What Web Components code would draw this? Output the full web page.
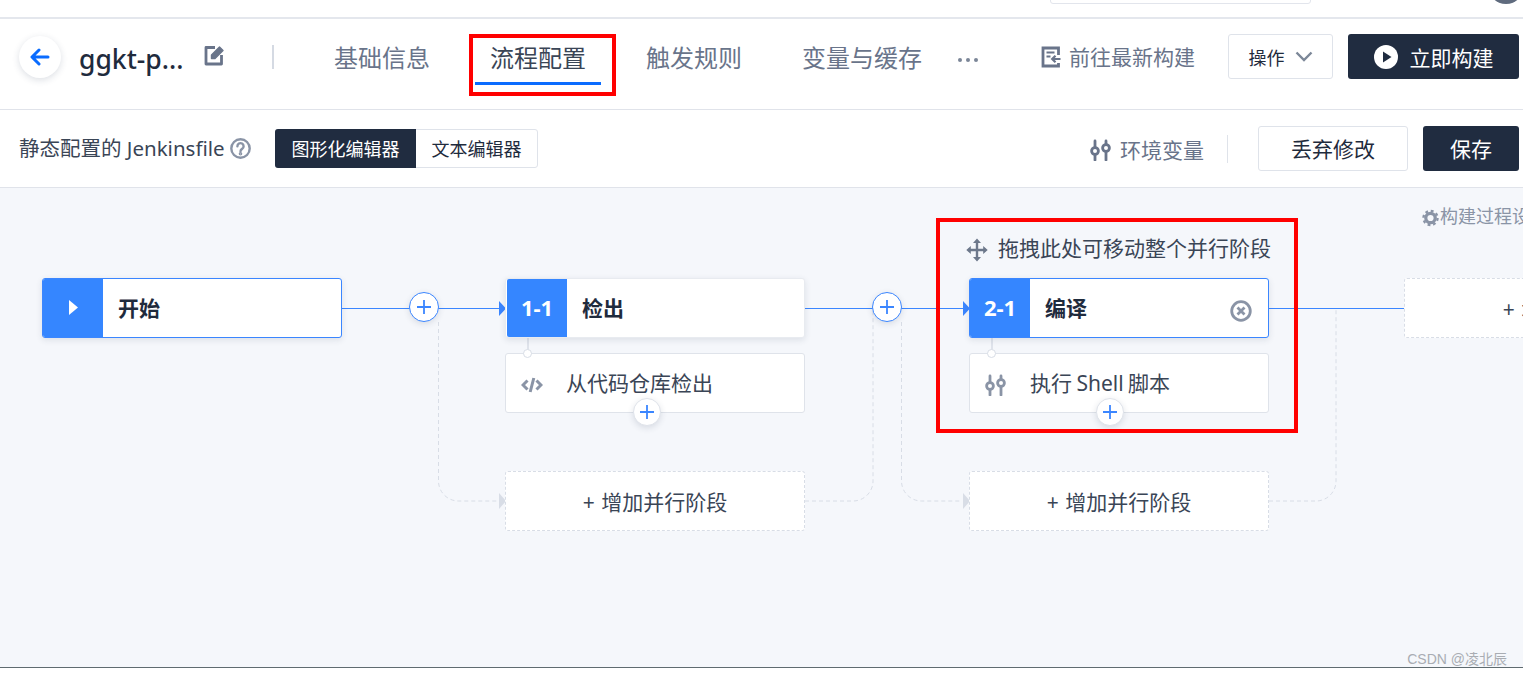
<!DOCTYPE html>
<html lang="zh">
<head>
<meta charset="utf-8">
<title>流程配置</title>
<style>
  html, body { margin: 0; height: 100%; overflow: hidden; background: #fff; }
  body { font-family: "Noto Sans", "Noto Sans CJK SC", sans-serif; color: #1f2b3d; }
</style>
</head>
<body>

<pipeline-page>
  <top-strip></top-strip>
  <pipeline-header>
    <nav-tab>基础信息</nav-tab>
    <nav-tab active>流程配置</nav-tab>
    <nav-tab>触发规则</nav-tab>
    <nav-tab>变量与缓存</nav-tab>
  </pipeline-header>
  <editor-toolbar></editor-toolbar>
  <flow-canvas>
    <flow-stage x="42" y="90" badge="start" label="开始" active></flow-stage>
    <flow-stage x="505" y="90" badge="1-1" label="检出"></flow-stage>
    <flow-stage x="969" y="90" badge="2-1" label="编译" active closable></flow-stage>
    <flow-step x="505" y="165" icon="code">从代码仓库检出</flow-step>
    <flow-step x="969" y="165" icon="sliders">执行 Shell 脚本</flow-step>
    <flow-ghost x="505" y="283">+ 增加并行阶段</flow-ghost>
    <flow-ghost x="969" y="283">+ 增加并行阶段</flow-ghost>
    <flow-ghost x="1404" y="90">+ 增加阶段</flow-ghost>
    <flow-add x="424" y="119" ring></flow-add>
    <flow-add x="887" y="119" ring></flow-add>
    <flow-add x="647" y="224"></flow-add>
    <flow-add x="1110" y="224"></flow-add>
    <drag-hint x="966" y="45">拖拽此处可移动整个并行阶段</drag-hint>
    <process-settings x="1422" y="15">构建过程设置</process-settings>
    <water-mark>CSDN @凌北辰</water-mark>
  </flow-canvas>
  <mark-box style="left:469px;top:34px;width:147px;height:62px"></mark-box>
  <mark-box style="left:936px;top:218px;width:362px;height:215px"></mark-box>
</pipeline-page>

<script>
// small helper, every element just sets its shadow html once
class Base extends HTMLElement {
  constructor() {
    super();
    this.attachShadow({mode: 'open'}).innerHTML = this.render();
  }
  render() { return '<slot></slot>'; }
}

// elements placed on the flow canvas read their place from x / y
class CanvasItem extends Base {
  connectedCallback() {
    this.style.left = this.getAttribute('x') + 'px';
    this.style.top = this.getAttribute('y') + 'px';
  }
}

const ICONS = {
  sliders: `<svg width="21" height="22" viewBox="0 0 21 22" fill="none" stroke="currentColor" stroke-width="2.8" stroke-linecap="round">
    <path d="M5 2v5.500M5 16.500V21M16 2v3M16 13.500V21"/><circle cx="5" cy="12" r="3.400"/><circle cx="16" cy="9" r="3.400"/></svg>`,
  code: `<svg width="22" height="18" viewBox="0 0 22 18" fill="none" stroke="currentColor" stroke-width="3">
    <path d="M6.500 4.500 2 9l4.500 4.500M15.500 4.500 20 9l-4.500 4.500M12.800 2 9.200 16"/></svg>`
};

class PipelinePage extends Base {
  render() {
    return `<style>
      :host { display: flex; flex-direction: column; position: relative; width: 1523px; height: 676px; overflow: hidden; }
    </style><slot></slot>`;
  }
}

class TopStrip extends Base {
  render() {
    return `<style>
      :host { display: block; height: 17px; border-bottom: 2px solid #e4e7ed; position: relative; flex: none; }
      .search { position: absolute; left: 1050px; top: -20px; width: 259px; height: 22px; border: 1px solid #e2e5ec; border-radius: 3px; }
      .avatar { position: absolute; left: 1488px; top: -32px; width: 36px; height: 36px; border-radius: 50%; background: #5f6b7e; }
    </style><div class="search"></div><div class="avatar"></div>`;
  }
}

class PipelineHeader extends Base {
  render() {
    return `<style>
      :host { display: flex; align-items: center; flex: none; height: 91px; padding: 0 4px 14px 19px; box-sizing: border-box;
        border-bottom: 1px solid #e0e3ea; }
      .back { width: 42px; height: 42px; border-radius: 50%; background: #fff; box-shadow: 0 2px 7px rgba(40,55,85,.16);
        display: flex; align-items: center; justify-content: center; flex: none; }
      .title { margin: 4px 18px 0 18px; font-size: 26.5px; font-weight: 500; color: #1f2b3d; width: 107px; white-space: nowrap; line-height: 36px; }
      .edit { display: block; flex: none; margin-top: -3px; }
      .sep { width: 2px; height: 24px; background: #d5dae3; margin: 0 60px 0 47px; flex: none; }
      .tabs { display: flex; gap: 60px; width: 588px; flex: none; align-items: center; margin-top: 2px; }
      .more { display: flex; gap: 4px; margin: 6px 63px 0 36px; width: 20px; flex: none; }
      .more i { width: 4px; height: 4px; border-radius: 50%; background: #7b8698; }
      .go { display: flex; align-items: center; gap: 8px; color: #69748a; font-size: 21px; flex: none; width: 187px; }
      .go span { padding-bottom: 2px; }
      .btn { box-sizing: border-box; height: 45px; border-radius: 3px; display: flex; align-items: center; justify-content: center; flex: none; font-size: 18px; margin-top: -1px; }
      .ops { width: 105px; border: 1px solid #dfe3ea; color: #1f2b3d; gap: 10px; }
      .run { width: 171px; background: #202c40; color: #fff; margin-left: 15px; font-size: 21px; gap: 12px; }
    </style>
    <div class="back"><svg width="20" height="18" viewBox="0 0 20 18" fill="none" stroke="#0a6cff" stroke-width="3" stroke-linecap="round" stroke-linejoin="round"><path d="M18 9H2.500M9 2 2 9l7 7"/></svg></div>
    <div class="title">ggkt-p...</div>
    <svg class="edit" width="21" height="21" viewBox="0 0 21 21" fill="none" stroke="#69748a" stroke-width="2.800" stroke-linejoin="round"><path d="M11 2.500H2V19h15.500V10"/><path d="M7.500 10 15.500 2l3.500 3.500L11 13.500H7.500z" fill="#69748a" stroke-width="1.400"/></svg>
    <div class="sep"></div>
    <div class="tabs"><slot></slot></div>
    <div class="more"><i></i><i></i><i></i></div>
    <div class="go">
      <svg width="20" height="22" viewBox="0 0 20 22" fill="none" stroke="currentColor" stroke-width="2.800"><path d="M17.500 9V2H2v18h15.500v-3"/><path d="M5.500 6.500h8M5.500 10.500h4" stroke-width="2.200"/><path d="M19.500 13h-8M14.500 9.800 11.200 13l3.300 3.200" stroke-width="2.200"/></svg>
      <span>前往最新构建</span>
    </div>
    <div class="btn ops"><span>操作</span><svg width="18" height="11" viewBox="0 0 18 11" fill="none" stroke="#7c8798" stroke-width="2.400"><path d="M1.500 1.500 9 9l7.500-7.500"/></svg></div>
    <div class="btn run">
      <svg width="24" height="24" viewBox="0 0 24 24"><circle cx="12" cy="12" r="12" fill="#fff"/><path d="M9 6.500v11l8.500-5.500z" fill="#202c40"/></svg>
      <span>立即构建</span>
    </div>`;
  }
}

class NavTab extends Base {
  render() {
    return `<style>
      :host { display: block; position: relative; font-size: 24px; line-height: 34px; color: #69748a; white-space: nowrap; }
      :host([active]) { color: #3a4556; }
      :host([active])::after { content: ""; position: absolute; left: -15px; right: -15px; top: 41px; height: 3px; background: #0a6cff; }
    </style><slot></slot>`;
  }
}

class EditorToolbar extends Base {
  render() {
    return `<style>
      :host { display: flex; align-items: center; flex: none; height: 78px; padding: 0 4px 0 19px; box-sizing: border-box;
        border-bottom: 1px solid #e0e3ea; }
      .lead { font-size: 20.500px; color: #3a4556; white-space: nowrap; width: 205px; flex: none; padding-bottom: 4px; }
      .help { margin: 0 24px 0 6px; flex: none; }
      .seg { display: flex; height: 39px; box-sizing: border-box; border: 1px solid #dfe3ea; border-radius: 3px; font-size: 18px; flex: none; }
      .seg div { display: flex; align-items: center; justify-content: center; padding-bottom: 2px; box-sizing: border-box; }
      .seg .on { width: 141px; margin: -1px 0 -1px -1px; background: #202c40; color: #fff; border-radius: 3px 0 0 3px; }
      .seg .off { width: 121px; color: #1f2b3d; }
      .env { display: flex; align-items: center; gap: 9px; margin-left: auto; color: #69748a; font-size: 21px; }
      .env svg { margin-top: 2px; }
      .bar { width: 1px; height: 28px; background: #dfe3ea; margin: 0 30px 0 23px; }
      .btn { box-sizing: border-box; height: 45px; border-radius: 3px; display: flex; align-items: center; justify-content: center; font-size: 21px; flex: none; padding-bottom: 2px; }
      .drop { width: 150px; border: 1px solid #dfe3ea; color: #1f2b3d; }
      .save { width: 96px; margin-left: 15px; background: #202c40; color: #fff; }
    </style>
    <span class="lead">静态配置的 Jenkinsfile</span>
    <svg class="help" width="21" height="21" viewBox="0 0 21 21" fill="none" stroke="#8a94a6" stroke-width="2.400"><circle cx="10.500" cy="10.500" r="9.200"/><path d="M7.400 8.200a3.100 3.100 0 1 1 4.700 2.700c-1 .6-1.600 1.100-1.600 2.300" stroke-linecap="round"/><circle cx="10.500" cy="15.800" r=".6" fill="#8a94a6"/></svg>
    <div class="seg"><div class="on">图形化编辑器</div><div class="off">文本编辑器</div></div>
    <div class="env">${ICONS.sliders}<span>环境变量</span></div>
    <div class="bar"></div>
    <div class="btn drop">丢弃修改</div>
    <div class="btn save">保存</div>`;
  }
}

class FlowCanvas extends Base {
  render() {
    return `<style>
      :host { display: block; position: relative; flex: none; height: 479px; background: #f5f7fb; border-bottom: 1px solid #5f6b70; overflow: hidden; }
      svg { position: absolute; left: 0; top: 0; }
    </style>
    <svg width="1523" height="479" fill="none">
      <g stroke="#d8dde6" stroke-dasharray="4 3">
        <path d="M438.500 134V293a20 20 0 0 0 20 20H498"/>
        <path d="M805 313H853a20 20 0 0 0 20-20V120"/>
        <path d="M901.500 134V293a20 20 0 0 0 20 20H962"/>
        <path d="M1269 313H1316a20 20 0 0 0 20-20V120"/>
      </g>
      <g fill="#d8dde6"><path d="M499 305l7 8-7 8zM963 305l7 8-7 8z"/></g>
      <path d="M342 120.500H500M805 120.500H965M1269 120.500H1404" stroke="#3b86ff"/>
      <g fill="#3b86ff"><path d="M499 113l7 7.500-7 7.500zM963 113l7 7.500-7 7.500z"/></g>
      <g stroke="#d8dde6" stroke-width="1.500"><path d="M528 150v14M992 150v14"/></g>
    </svg>
    <slot></slot>`;
  }
}

class FlowStage extends CanvasItem {
  render() {
    const badge = this.getAttribute('badge');
    const mark = badge == 'start'
      ? '<svg width="9" height="15" viewBox="0 0 9 15"><path d="M0 0l9 7.500-9 7.500z" fill="#fff"/></svg>'
      : badge;
    const close = this.hasAttribute('closable')
      ? `<svg class="x" width="22" height="22" viewBox="0 0 22 22" fill="none" stroke="#8a94a6" stroke-width="2.800"><circle cx="11" cy="11" r="9.300"/><path d="M7.500 7.500l7 7M14.500 7.500l-7 7"/></svg>`
      : '';
    return `<style>
      :host { position: absolute; display: flex; box-sizing: border-box; width: 300px; height: 60px; background: #fff; border-radius: 3px;
        border: 1px solid #e8ebf0; box-shadow: 0 2px 6px rgba(40,55,85,.12); }
      :host([active]) { border-color: #3b86ff; }
      .badge { width: 60px; margin: 0 0 0 1px; display: flex; align-items: center; justify-content: center; background: #3586ff; color: #fff;
        font-size: 22px; font-weight: 700; flex: none; border-radius: 2px 0 0 2px; padding-bottom: 2px; box-sizing: border-box; }
      :host([active]) .badge { margin-left: 0; }
      .label { margin-left: 15px; font-size: 21px; font-weight: 700; color: #1f2b3d; align-self: center; padding-bottom: 2px; }
      .x { position: absolute; left: 260px; top: 21px; }
    </style>
    <div class="badge">${mark}</div><div class="label">${this.getAttribute('label')}</div>${close}`;
  }
}

class FlowStep extends CanvasItem {
  render() {
    return `<style>
      :host { position: absolute; display: flex; align-items: center; box-sizing: border-box; width: 300px; height: 60px; background: #fff;
        border: 1px solid #dfe3ea; border-radius: 3px; font-size: 21px; color: #3a4556; padding: 0 0 2px 15px; word-spacing: -1px; }
      .icon { width: 45px; flex: none; color: #8a94a6; display: flex; margin-top: 5px; }
      .dot { position: absolute; left: 17px; top: -5px; width: 7px; height: 7px; border-radius: 50%; background: #fff; border: 1px solid #d8dde6; }
    </style>
    <div class="dot"></div><div class="icon">${ICONS[this.getAttribute('icon')]}</div><slot></slot>`;
  }
}

class FlowGhost extends CanvasItem {
  render() {
    return `<style>
      :host { position: absolute; display: flex; align-items: center; justify-content: center; box-sizing: border-box; width: 300px; height: 60px; padding-bottom: 1px;
        background: #fff; border: 1px dashed #d8dde6; border-radius: 3px; font-size: 21px; color: #3a4556; white-space: nowrap; word-spacing: 1px; }
    </style><slot></slot>`;
  }
}

class FlowAdd extends CanvasItem {
  render() {
    return `<style>
      :host { position: absolute; display: flex; align-items: center; justify-content: center; box-sizing: border-box; width: 28px; height: 28px;
        margin: -14px 0 0 -14px; background: #fff; border-radius: 50%; border: 1px solid #dfe3ea; box-shadow: 0 2px 6px rgba(40,55,85,.14); }
      :host([ring]) { border-color: #3b86ff; width: 30px; height: 30px; margin: -15px 0 0 -15px; }
    </style>
    <svg width="16" height="16" viewBox="0 0 16 16" stroke="#3b86ff" stroke-width="1.800"><path d="M8 1v14M1 8h14"/></svg>`;
  }
}

class DragHint extends CanvasItem {
  render() {
    return `<style>
      :host { position: absolute; display: flex; align-items: center; gap: 10px; font-size: 21px; line-height: 30px; color: #3a4556; white-space: nowrap; }
      svg { margin-top: 4px; }
    </style>
    <svg width="22" height="24" viewBox="0 0 22 24" fill="#6d788b" stroke="#6d788b" stroke-width="2.400"><path d="M11 3v18M2.500 12h17" fill="none"/><path d="M11 .5l4 4.500H7zM11 23.500l-4-4.500h8zM.3 12l4.500-4v8zM21.700 12l-4.500-4v8z" stroke="none"/></svg>
    <slot></slot>`;
  }
}

class ProcessSettings extends CanvasItem {
  render() {
    return `<style>
      :host { position: absolute; display: flex; align-items: center; gap: 1px; font-size: 18px; line-height: 26px; color: #8a94a6; white-space: nowrap; }
      svg { margin-top: 4px; }
    </style>
    <svg width="17" height="18" viewBox="0 0 18 18" fill="none" stroke="#8a94a6"><circle cx="9" cy="9" r="5" stroke-width="3.400"/><circle cx="9" cy="9" r="7.500" stroke-width="2.400" stroke-dasharray="3 2.900"/></svg>
    <slot></slot>`;
  }
}

class WaterMark extends Base {
  render() {
    return `<style>
      :host { position: absolute; right: 16px; bottom: -1px; font-family: "Liberation Sans", "Noto Sans CJK SC", sans-serif; font-size: 14px; line-height: 18px; color: #a9adb3; white-space: nowrap; }
    </style><slot></slot>`;
  }
}

class MarkBox extends Base {
  render() {
    return `<style>
      :host { position: absolute; box-sizing: border-box; border: 4px solid #f00; pointer-events: none; }
    </style>`;
  }
}

customElements.define('pipeline-page', PipelinePage);
customElements.define('top-strip', TopStrip);
customElements.define('pipeline-header', PipelineHeader);
customElements.define('nav-tab', NavTab);
customElements.define('editor-toolbar', EditorToolbar);
customElements.define('flow-canvas', FlowCanvas);
customElements.define('flow-stage', FlowStage);
customElements.define('flow-step', FlowStep);
customElements.define('flow-ghost', FlowGhost);
customElements.define('flow-add', FlowAdd);
customElements.define('drag-hint', DragHint);
customElements.define('process-settings', ProcessSettings);
customElements.define('water-mark', WaterMark);
customElements.define('mark-box', MarkBox);
</script>
</body>
</html>
